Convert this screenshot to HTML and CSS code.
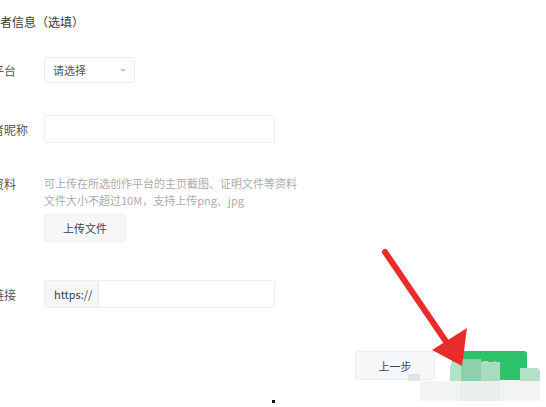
FILE: index.html
```html
<!DOCTYPE html>
<html lang="zh">
<head>
<meta charset="utf-8">
<title>创作者信息</title>
<link rel="stylesheet" href="styles.css">
</head>
<body>
<div class="page">
  <div class="form">
    <h2 class="title">创作者信息（选填）</h2>
    <div class="row row-platform">
      <span class="label">创作平台</span>
      <div class="select"><span class="placeholder">请选择</span><span class="caret"></span></div>
    </div>
    <div class="row row-nick">
      <span class="label">创作者昵称</span>
      <div class="input wide"></div>
    </div>
    <div class="row row-upload">
      <span class="label">证明资料</span>
      <div class="upload">
        <p class="hint">可上传在所选创作平台的主页截图、证明文件等资料<br>文件大小不超过10M，支持上传png、jpg</p>
        <button class="btn btn-light upload-btn">上传文件</button>
      </div>
    </div>
    <div class="row row-url">
      <span class="label">主页链接</span>
      <div class="input wide group"><span class="addon">https://</span><span class="field"></span></div>
    </div>
  </div>
  <div class="actions">
    <button class="btn btn-light prev">上一步</button>
    <button class="btn btn-green next">提交</button>
  </div>

  <div class="wm">
    <span class="wm-a"></span><span class="wm-b"></span><span class="wm-c"></span><span class="wm-d"></span>
    <span class="wm-e"></span><span class="wm-f"></span><span class="wm-g"></span><span class="wm-h"></span>
  </div>
  <svg class="arrow" width="546" height="407" viewBox="0 0 546 407">
    <line x1="385" y1="252" x2="447" y2="343" stroke="#ea2b2b" stroke-width="6" stroke-linecap="round"/>
    <polygon points="432,350 467,328 462,366" fill="#ea2b2b"/>
  </svg>
  <span class="dot"></span>
</div>
</body>
</html>
```
FILE: styles.css
```css
html, body {
  margin: 0;
  padding: 0;
  background: #fff;
}
.page {
  position: relative;
  width: 546px;
  height: 407px;
  overflow: hidden;
  font-family: "Noto Sans CJK SC", "Noto Sans", sans-serif;
  color: #444;
}
.form {
  padding-top: 12px;
  margin-left: -32px;
}
.title {
  margin: 0 0 25px 8px;
  font-size: 12px;
  line-height: 20px;
  font-weight: 400;
  color: #3a3a3a;
}
.row {
  display: flex;
  align-items: center;
}
.label {
  width: 76px;
  flex: none;
  font-size: 12px;
  color: #555;
  white-space: nowrap;
}
.select {
  height: 24px;
  border: 1px solid #ececec;
  border-radius: 3px;
  display: flex;
  align-items: center;
  justify-content: space-between;
  padding: 0 8px 0 8px;
  box-sizing: content-box;
  width: 73px;
}
.placeholder {
  font-size: 11px;
  color: #555;
}
.caret {
  width: 0;
  height: 0;
  border-left: 3px solid transparent;
  border-right: 3px solid transparent;
  border-top: 3px solid #c4c4c4;
}
.row-nick {
  margin-top: 32px;
}
.input {
  height: 26px;
  border: 1px solid #eeeeee;
  border-radius: 3px;
}
.wide {
  width: 229px;
}
.row-upload {
  margin-top: 32px;
  align-items: flex-start;
}
.row-upload .label {
  line-height: 17px;
}
.hint {
  margin: 0;
  font-size: 11px;
  line-height: 17px;
  color: #ababab;
}
.btn {
  font-family: inherit;
  font-size: 11px;
  border-radius: 3px;
  padding: 0;
  cursor: pointer;
}
.btn-light {
  background: #f6f7f8;
  border: 1px solid #ededed;
  color: #444;
}
.upload-btn {
  margin-top: 5px;
  width: 82px;
  height: 28px;
  display: block;
}
.row-url {
  margin-top: 38px;
}
.group {
  display: flex;
  overflow: hidden;
}
.addon {
  width: 54px;
  background: #f5f6f7;
  border-right: 1px solid #e8e8e8;
  font-size: 11px;
  line-height: 26px;
  padding-left: 9px;
  box-sizing: border-box;
  color: #444;
}
.field {
  flex: 1;
}
.actions {
  display: flex;
  justify-content: flex-end;
  gap: 17px;
  margin-top: 43px;
  padding-right: 19px;
}
.prev {
  width: 80px;
  height: 29px;
}
.btn-green {
  width: 75px;
  height: 29px;
  background: #2ec26c;
  border: none;
  color: #fff;
}
.wm span {
  position: absolute;
  display: block;
}
.wm-a { left: 437px; top: 355px; width: 13px; height: 26px; background: #fff; }
.wm-b { left: 450px; top: 360px; width: 11px; height: 21px; background: #b4e2c8; border-top-left-radius: 8px; }
.wm-c { left: 461px; top: 359px; width: 20px; height: 22px; background: #8ed0ab; }
.wm-d { left: 481px; top: 362px; width: 19px; height: 19px; background: #a8dcbf; }
.wm-e { left: 520px; top: 368px; width: 20px; height: 13px; background: #b2e1c7; border-top-right-radius: 4px; }
.wm-f { left: 420px; top: 381px; width: 120px; height: 20px; background: #f2f4f3; }
.wm-g { left: 460px; top: 381px; width: 40px; height: 20px; background: #eaeeec; }
.wm-h { left: 408px; top: 374px; width: 12px; height: 7px; background: #e2e3e4; }
.arrow {
  position: absolute;
  left: 0;
  top: 0;
  pointer-events: none;
}
.dot {
  position: absolute;
  left: 272px;
  top: 400px;
  width: 3px;
  height: 3px;
  background: #111;
}
```
